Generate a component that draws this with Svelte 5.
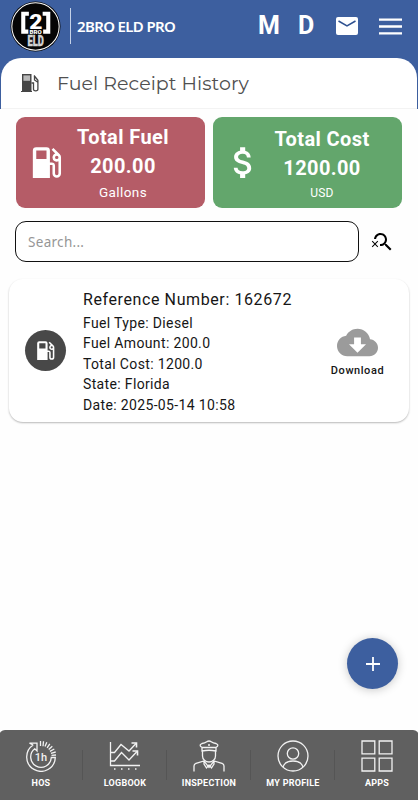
<script lang="ts">
	let search = $state('');

	const receipt = {
		reference: '162672',
		details: [
			['Fuel Type', 'Diesel'],
			['Fuel Amount', '200.0'],
			['Total Cost', '1200.0'],
			['State', 'Florida'],
			['Date', '2025-05-14 10:58']
		]
	};

	const tabs = ['HOS', 'LOGBOOK', 'INSPECTION', 'MY PROFILE', 'APPS'];
</script>

{#snippet pump()}
	<svg class="pump" viewBox="0 0 24 24" fill="currentColor">
		<path
			d="M18 10a1 1 0 1 1 0-2 1 1 0 0 1 0 2M12 10H6V5h6M19.77 7.23l.01-.01-3.72-3.72L15 4.56l2.11 2.11C16.17 7 15.5 7.93 15.5 9a2.5 2.5 0 0 0 3.5 2.29v7.21a1 1 0 0 1-2 0V14a2 2 0 0 0-2-2h-1V5a2 2 0 0 0-2-2H6a2 2 0 0 0-2 2v16h10v-7.5h1.5v5a2.5 2.5 0 0 0 5 0V9c0-.69-.28-1.32-.73-1.77Z"
		/>
	</svg>
{/snippet}

<div class="screen">
	<header>
		<svg class="logo" viewBox="0 0 50 50">
			<circle cx="25" cy="25" r="24.5" fill="#050505" />
			<circle cx="25" cy="25" r="23.2" fill="none" stroke="#fff" stroke-width="1" />
			<path d="M18.5 12.5H13v17.500h5M32 12.500h5.500V30h-5" fill="none" stroke="#fff" stroke-width="4" />
			<text class="two" x="25.3" y="27.5" text-anchor="middle" textLength="13" lengthAdjust="spacingAndGlyphs">2</text>
			<text class="bro" x="25.2" y="32.3" text-anchor="middle" textLength="12" lengthAdjust="spacingAndGlyphs">BRO</text>
			<text class="eld" x="25.2" y="44.6" text-anchor="middle" textLength="16" lengthAdjust="spacingAndGlyphs">ELD</text>
		</svg>
		<span class="brand">2BRO ELD PRO</span>
		<span class="letter">M</span>
		<span class="letter letter-d">D</span>
		<svg class="mail" viewBox="0 0 22 18">
			<rect width="22" height="18" rx="2" fill="#fff" />
			<path d="M2.5 4 11 9l8.5-5" fill="none" stroke="#2f5190" stroke-width="1.5" />
		</svg>
		<svg class="menu" viewBox="0 0 23 17" stroke="#fff" stroke-width="2.3">
			<path d="M0 1.7h23M0 8.5h23M0 15.3h23" />
		</svg>
	</header>

	<div class="title-wrap">
		<div class="title-bar">
			<svg class="title-icon" viewBox="0 0 18 20">
				<path d="M1 1h9.5v17.5H1z" fill="#454545" />
				<path d="M2.4 2.4h6.7v5.4H2.4z" fill="#b9b9b9" />
				<path
					d="M10.5 10h2v6.3q0 1.5 2.2 1.5t2.2-1.5V7.3L13 2.5M13.5 3v4l3 2"
					fill="none"
					stroke="#454545"
					stroke-width="1.3"
				/>
				<path d="M0 18.5h11" stroke="#454545" />
			</svg>
			<h1>Fuel Receipt History</h1>
		</div>
	</div>

	<section class="totals">
		<div class="total fuel">
			{@render pump()}
			<div class="figures">
				<strong>Total Fuel</strong>
				<strong>200.00</strong>
				<span>Gallons</span>
			</div>
		</div>
		<div class="total cost">
			<svg class="dollar" viewBox="0 0 24 24" fill="currentColor">
				<path
					d="M11.8 10.9c-2.27-.59-3-1.2-3-2.15 0-1.09 1.01-1.85 2.7-1.85 1.78 0 2.44.85 2.5 2.1h2.21c-.07-1.72-1.12-3.3-3.21-3.81V3h-3v2.16c-1.94.42-3.5 1.68-3.5 3.61 0 2.31 1.91 3.46 4.7 4.13 2.5.6 3 1.48 3 2.41 0 .69-.49 1.79-2.7 1.79-2.06 0-2.87-.92-2.98-2.1h-2.2c.12 2.19 1.76 3.42 3.68 3.83V21h3v-2.15c1.95-.37 3.5-1.5 3.5-3.55 0-2.84-2.43-3.81-4.7-4.4z"
				/>
			</svg>
			<div class="figures">
				<strong>Total Cost</strong>
				<strong>1200.00</strong>
				<span>USD</span>
			</div>
		</div>
	</section>

	<div class="search">
		<input type="text" placeholder="Search..." bind:value={search} />
		<svg viewBox="0 0 24 24">
			<path
				d="M15.5 14h-.79l-.28-.27C15.41 12.59 16 11.11 16 9.5 16 5.91 13.09 3 9.5 3 6.08 3 3.28 5.64 3.03 9h2.02C5.3 6.75 7.18 5 9.5 5 11.99 5 14 7.01 14 9.5S11.99 14 9.5 14c-.17 0-.33-.03-.5-.05v2.02c.17.02.33.03.5.03 1.61 0 3.09-.59 4.23-1.57l.27.28v.79l5 4.99L20.49 19l-4.99-5z"
			/>
			<path d="M6.47 10.82 4 13.29l-2.47-2.47-.71.71L3.29 14 .82 16.47l.71.71L4 14.71l2.47 2.47.71-.71L4.71 14l2.47-2.47z" />
		</svg>
	</div>

	<article>
		<div class="avatar">{@render pump()}</div>
		<div class="info">
			<h2>Reference Number: {receipt.reference}</h2>
			{#each receipt.details as [name, value]}
				<p>{name}: {value}</p>
			{/each}
		</div>
		<div class="download">
			<svg viewBox="0 0 24 24" fill="#9b9b9b">
				<path
					d="M19.35 10.04C18.67 6.59 15.64 4 12 4 9.11 4 6.6 5.64 5.35 8.04 2.34 8.36 0 10.91 0 14c0 3.31 2.69 6 6 6h13c2.76 0 5-2.24 5-5 0-2.64-2.05-4.78-4.65-4.96zM17 13l-5 5-5-5h3V9h4v4h3z"
				/>
			</svg>
			<span>Download</span>
		</div>
	</article>

	<div class="fab">
		<svg viewBox="0 0 16 16" stroke="#fff" stroke-width="1.8"><path d="M8 1v14M1 8h14" /></svg>
	</div>

	<nav>
		{#each tabs as tab, i}
			<div class="tab">
				<svg viewBox="0 0 32 32" fill="none" stroke="#f2f2f2" stroke-width="1.3">
					{#if i === 0}
						<path d="M8.2 5A14.3 14.3 0 1 0 30.3 17.5h-4A10.3 10.3 0 1 1 9.8 8.8L12 11V3.200H4.500L8.200 5" />
						<path d="M15.5 1v5M18.5 1.2l-.5 5M21.8 2.2 20 6.6M24.8 3.9l-2.7 4M27.3 6.2l-3.6 3.3M29.3 9l-4.4 2.3M30.7 12l-4.8 1.3M31 15l-4.5.3" />
						<text x="16" y="20.5" text-anchor="middle">1h</text>
					{:else if i === 1}
						<path d="M1.5 2v23.5H31M2 12.5h3.5l6.5-8 8 6.5L27 3.5M2 21h3.5l7-8.5L20 20l8-8.5" />
						<path d="M22.5 3h5v4.5M23.5 11h5v4.5" stroke-width="1.6" />
						<path d="M5 29h1.5M12 29h1.5M19 29h1.5M26 29h1.5" />
					{:else if i === 2}
						<path d="M9 7.5C6 5.5 7 4.5 9 3.5 14 3 13.5 1 16 1s2 2 7 2.5c2 1 3 2 0 4zM9 7.5V11q7-1.5 14 0V7.5M9.5 11v5c0 3.5 3 6 6.5 6s6.5-2.5 6.5-6v-5" />
						<path d="M1 31.5V26q0-2 2-2.7l8-2.3 5 6.5 5-6.5 8 2.3q2 .7 2 2.7v5.5M11 21v3l2.5 4 2.5-3 2.5 3 2.5-4v-3M15 5h2" />
					{:else if i === 3}
						<circle cx="16" cy="16" r="15" />
						<circle cx="16" cy="13.5" r="5.7" />
						<path d="M6 27q2-6 10-6t10 6" />
					{:else}
						<path d="M1 1h12.8v12.8H1zM18.2 1H31v12.8H18.2zM1 18.2h12.8V31H1zM18.2 18.2H31V31H18.2z" />
					{/if}
				</svg>
				<span>{tab}</span>
			</div>
		{/each}
	</nav>
</div>

<style>
	:global(body) {
		margin: 0;
	}

	.screen {
		position: relative;
		display: flex;
		flex-direction: column;
		width: 418px;
		height: 800px;
		overflow: hidden;
		background: #fefefe;
		font-family: Roboto, sans-serif;
		color: #161616;
	}

	svg {
		display: block;
		flex: none;
	}

	header {
		display: flex;
		align-items: center;
		height: 52px;
		padding: 0 16px 6px 10px;
		background: #3d5f9f;
	}

	.logo {
		width: 51px;
		height: 51px;
		font-family: Roboto, sans-serif;
		font-weight: 900;
		fill: #fff;
	}

	.two {
		font-size: 20px;
	}

	.bro {
		font-size: 4.5px;
	}

	.eld {
		font-size: 14.5px;
		fill: #d2d2d2;
		stroke: #d2d2d2;
		stroke-width: 0.5px;
	}

	.brand {
		width: 181px;
		margin-left: 9px;
		padding-left: 6px;
		border-left: 1px solid #c5d2e8;
		color: #fff;
		font: 600 15px/36px 'Noto Sans', sans-serif;
		letter-spacing: -0.65px;
		white-space: nowrap;
	}

	.letter {
		width: 40px;
		color: #fff;
		font: 700 25px/30px Roboto, sans-serif;
	}

	.letter-d {
		width: 38px;
	}

	.mail {
		width: 22px;
		height: 18px;
	}

	.menu {
		width: 23px;
		height: 17px;
		margin-left: 21px;
	}

	.title-wrap {
		padding: 0 1px;
		background: #3d5f9f;
	}

	.title-bar {
		display: flex;
		align-items: center;
		gap: 18px;
		height: 50px;
		padding-left: 20px;
		border-bottom: 1px solid #f3f3f3;
		border-radius: 20px 20px 0 0;
		background: #fff;
	}

	.title-icon {
		width: 18px;
		height: 20px;
	}

	h1 {
		margin: 2px 0 0;
		color: #505050;
		font: 400 19px/24px Montserrat, Inter, sans-serif;
		letter-spacing: 0.05px;
	}

	.totals {
		display: flex;
		gap: 8px;
		padding: 8px 16px 0;
	}

	.total {
		display: flex;
		align-items: center;
		box-sizing: border-box;
		width: 189px;
		height: 91px;
		padding-left: 10px;
		border-radius: 9px;
		color: #fff;
	}

	.total svg {
		width: 41px;
		height: 41px;
	}

	.fuel {
		background: #b55c67;
	}

	.cost {
		background: #63a66c;
	}

	.figures {
		display: flex;
		flex-direction: column;
		align-items: center;
		width: 112px;
		padding-top: 1px;
	}

	.cost .figures {
		width: 116px;
		padding-top: 2px;
	}

	strong {
		font-size: 20px;
		font-weight: 700;
		line-height: 29px;
		letter-spacing: 0.4px;
		white-space: nowrap;
	}

	.figures span {
		font-size: 13.5px;
		line-height: 22px;
		letter-spacing: 0.4px;
	}

	.cost .figures span {
		font-size: 12px;
		line-height: 20px;
		letter-spacing: 0.2px;
	}

	.search {
		display: flex;
		align-items: center;
		gap: 12px;
		padding: 13px 15px 0;
	}

	input {
		box-sizing: border-box;
		width: 344px;
		height: 41px;
		padding: 0 12px;
		border: 1px solid #111;
		border-radius: 11px;
		outline: none;
		background: #fff;
		font: 400 13.5px 'Noto Sans', sans-serif;
		letter-spacing: 0.3px;
	}

	input::placeholder {
		color: #969696;
	}

	.search svg {
		width: 24px;
		height: 24px;
	}

	article {
		display: flex;
		align-items: center;
		box-sizing: border-box;
		width: 400px;
		height: 143px;
		margin: 17px 9px 0;
		padding-left: 16px;
		border-radius: 14px;
		background: #fff;
		box-shadow: 0 1px 2px rgb(0 0 0 / 28%);
	}

	.avatar {
		display: grid;
		place-items: center;
		width: 41px;
		height: 41px;
		border-radius: 50%;
		background: #484848;
		color: #fff;
	}

	.avatar :global(.pump) {
		width: 25px;
		height: 25px;
	}

	.info {
		width: 248px;
		padding: 1px 0 0 17px;
	}

	h2 {
		margin: 0;
		font-size: 16px;
		font-weight: 400;
		line-height: 26px;
		letter-spacing: 0.6px;
		white-space: nowrap;
	}

	p {
		margin: 0;
		font-size: 14px;
		line-height: 20.4px;
		letter-spacing: 0.35px;
	}

	.download {
		display: flex;
		flex-direction: column;
		align-items: center;
		width: 53px;
	}

	.download svg {
		width: 41px;
		height: 41px;
	}

	.download span {
		font-size: 11px;
		font-weight: 500;
		line-height: 16px;
		letter-spacing: 0.55px;
	}

	.fab {
		position: absolute;
		top: 638px;
		left: 347px;
		display: grid;
		place-items: center;
		width: 51px;
		height: 51px;
		border-radius: 50%;
		background: #3d5f9f;
		box-shadow: 0 1px 10px rgb(0 0 0 / 22%);
	}

	.fab svg {
		width: 16px;
		height: 16px;
	}

	nav {
		display: flex;
		height: 70px;
		margin: auto -1px 0;
		border-radius: 6px 6px 0 0;
		background: #606060;
	}

	.tab {
		display: flex;
		flex: 1;
		flex-direction: column;
		align-items: center;
		gap: 6px;
		padding-top: 10px;
		background: linear-gradient(#555, #555) right 20px / 1px 30px no-repeat;
	}

	.tab:last-child {
		background: none;
	}

	.tab svg {
		width: 32px;
		height: 32px;
	}

	.tab text {
		fill: #f2f2f2;
		stroke: none;
		font: 500 11px Roboto, sans-serif;
	}

	.tab span {
		color: #fff;
		font-size: 9px;
		font-weight: 700;
		line-height: 11px;
		letter-spacing: 0.25px;
		white-space: nowrap;
	}
</style>
